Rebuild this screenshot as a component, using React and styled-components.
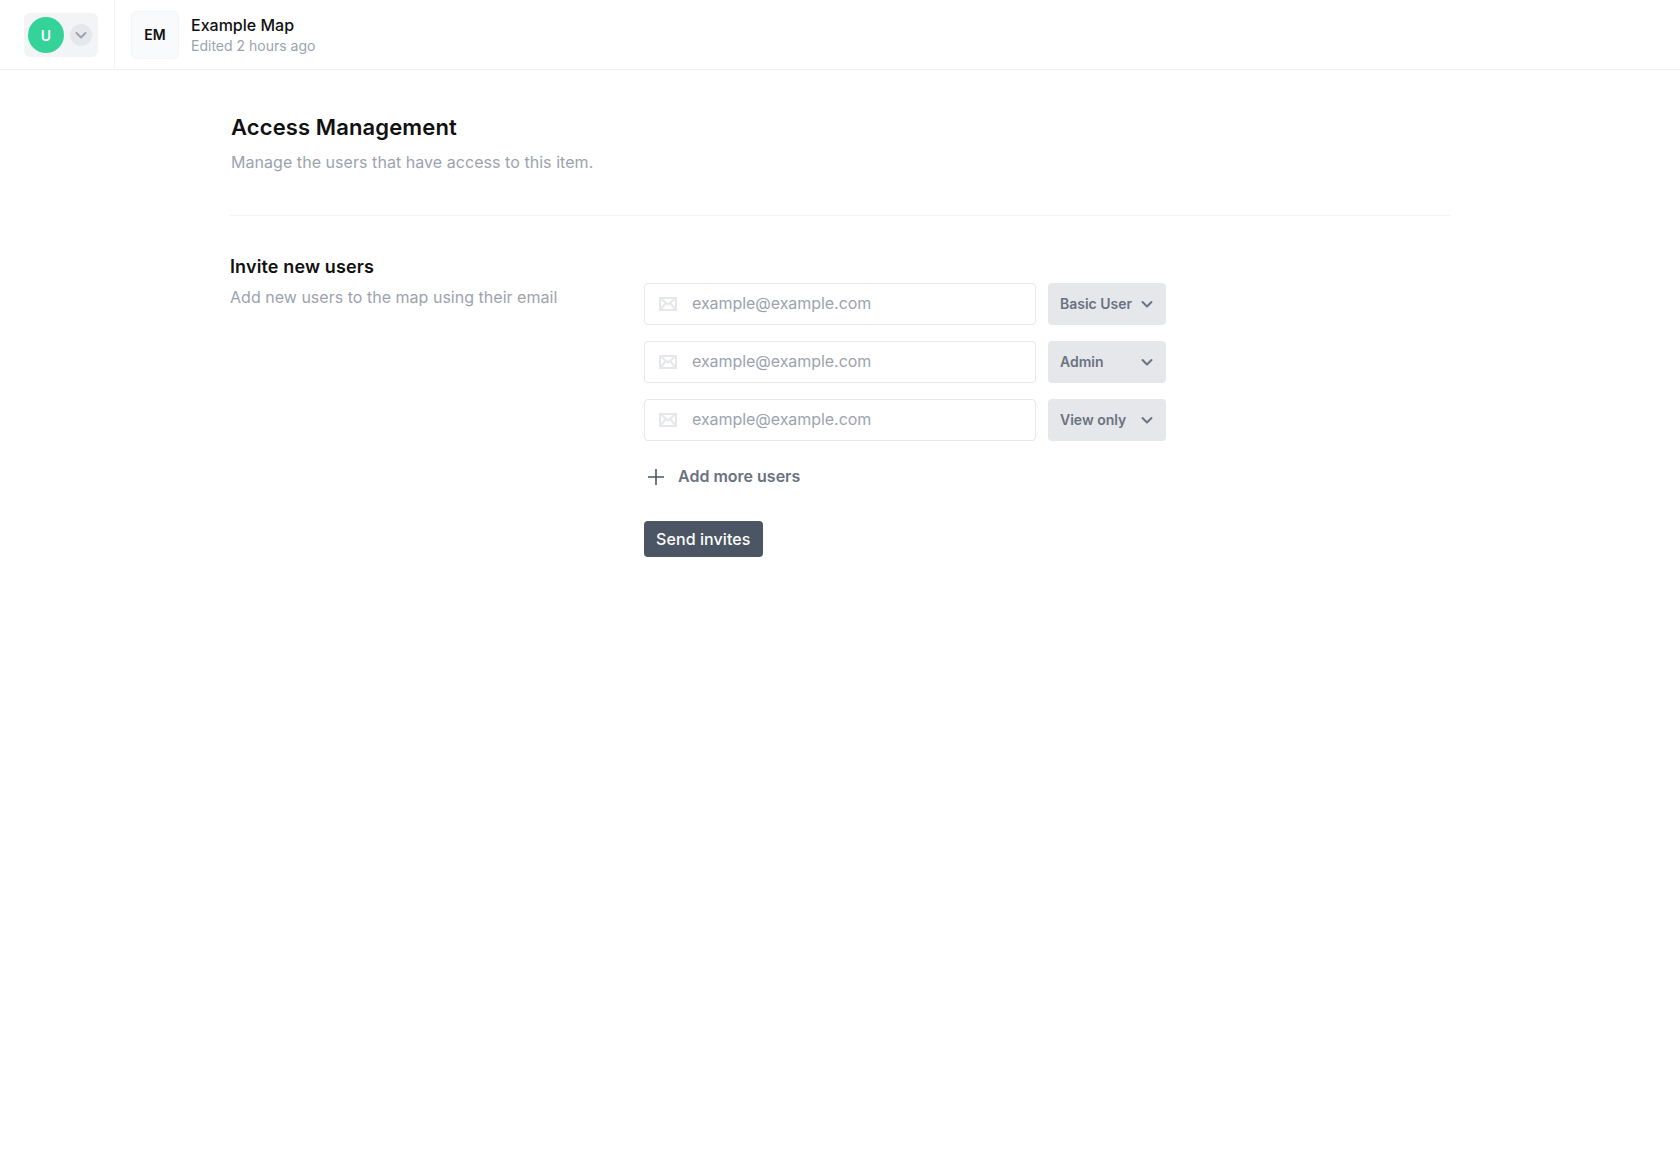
import React from 'react';
import styled, { createGlobalStyle } from 'styled-components';

const GlobalStyle = createGlobalStyle`
  html, body {
    margin: 0;
    padding: 0;
    background: #fff;
    font-family: Inter, "Liberation Sans", sans-serif;
  }
  * { box-sizing: border-box; }
`

//Header
const Header = styled.header`
  display: flex;
  height: 70px;
  border-bottom: 1px solid #f0f1f3;
`
const SwitcherArea = styled.div`
  width: 115px;
  padding: 13px 0 0 24px;
  border-right: 1px solid #f3f4f6;
`
const Switcher = styled.div`
  display: flex;
  align-items: center;
  width: 74px;
  height: 44px;
  padding-left: 4px;
  gap: 6px;
  background: #f3f4f6;
  border-radius: 6px;
`
const Avatar = styled.div`
  display: flex;
  align-items: center;
  justify-content: center;
  width: 36px;
  height: 36px;
  border-radius: 50%;
  background: #34d399;
  color: #fff;
  font-size: 14px;
  font-weight: 600;
`
const ChevronCircle = styled.div`
  display: flex;
  align-items: center;
  justify-content: center;
  width: 22px;
  height: 22px;
  border-radius: 50%;
  background: #e5e7eb;
  color: #9ca3af;
`
const MapInfo = styled.div`
  display: flex;
  align-items: center;
  gap: 12px;
  padding-left: 16px;
`
const MapBadge = styled.div`
  display: flex;
  align-items: center;
  justify-content: center;
  width: 48px;
  height: 48px;
  background: #f9fafb;
  border: 1px solid #f3f4f6;
  border-radius: 6px;
  color: #111;
  font-size: 14px;
  font-weight: 600;
`
const MapText = styled.div`
  padding-top: 1px;
`
const MapTitle = styled.div`
  color: #111;
  font-size: 16px;
  line-height: 20px;
  font-weight: 500;
`
const MapMeta = styled.div`
  margin-top: 1px;
  color: #9ca3af;
  font-size: 14px;
  line-height: 20px;
`

//Page
const Main = styled.main`
  width: 1220px;
  margin-left: 230px;
`
const PageHead = styled.div`
  padding: 42px 0 41px 1px;
  border-bottom: 1px solid #f3f4f6;
`
const PageTitle = styled.h1`
  margin: 0;
  color: #111;
  font-size: 22px;
  line-height: 30px;
  font-weight: 600;
  letter-spacing: 0.12px;
`
const PageSub = styled.p`
  margin: 8px 0 0;
  color: #9ca3af;
  font-size: 16px;
  line-height: 24px;
  letter-spacing: 0.05px;
`
const Section = styled.section`
  display: flex;
  padding-top: 38px;
`
const SectionInfo = styled.div`
  width: 414px;
`
const SectionTitle = styled.h2`
  margin: 0;
  color: #111;
  font-size: 18px;
  line-height: 26px;
  font-weight: 600;
  letter-spacing: 0.13px;
`
const SectionSub = styled.p`
  margin: 5px 0 0;
  color: #9ca3af;
  font-size: 16px;
  line-height: 24px;
  letter-spacing: 0.02px;
`
const InviteForm = styled.div`
  padding-top: 29px;
`
const Row = styled.div`
  display: flex;
  gap: 12px;
  margin-bottom: 16px;
`
const EmailField = styled.label`
  display: flex;
  align-items: center;
  width: 392px;
  height: 42px;
  padding-left: 14px;
  gap: 15px;
  border: 1px solid #e5e7eb;
  border-radius: 4px;
`
const EmailInput = styled.input`
  flex: 1;
  min-width: 0;
  margin-bottom: 2px;
  border: none;
  outline: none;
  padding: 0;
  background: none;
  color: #111;
  font-family: inherit;
  font-size: 16px;
  letter-spacing: -0.05px;

  &::placeholder {
    color: #9ca3af;
    opacity: 1;
  }
`
const RoleSelect = styled.div`
  display: flex;
  align-items: center;
  justify-content: space-between;
  width: 118px;
  height: 42px;
  padding: 0 11px 0 12px;
  background: #e5e7eb;
  border-radius: 4px;
  color: #6b7280;
  font-size: 14px;
  font-weight: 600;
`
const RoleLabel = styled.span`
  margin-bottom: 1px;
`
const AddMore = styled.button`
  display: flex;
  align-items: center;
  gap: 13px;
  height: 24px;
  margin-top: 24px;
  padding: 0 0 0 3px;
  border: none;
  background: none;
  color: #6b7280;
  font-family: inherit;
  font-size: 16px;
  font-weight: 600;
  cursor: pointer;
`
const AddLabel = styled.span`
  margin-bottom: 2px;
`
const SendButton = styled.button`
  display: block;
  height: 36px;
  margin-top: 32px;
  padding: 0 12px;
  border: none;
  border-radius: 4px;
  background: #4b5563;
  color: #fff;
  font-family: inherit;
  font-size: 16px;
  font-weight: 500;
  letter-spacing: 0.09px;
  cursor: pointer;
`

const Chevron = ({size = 16, width = 2}) => (
  <svg width={size} height={size} viewBox="0 0 16 16" fill="none" stroke="currentColor" strokeWidth={width} strokeLinecap="round" strokeLinejoin="round">
    <path d="M3.5 6l4.5 4.5L12.5 6" />
  </svg>
);

const MailIcon = () => (
  <svg width="18" height="14" viewBox="0 0 18 14" fill="none" stroke="#e5e7eb">
    <rect x="1" y="1" width="16" height="12" strokeWidth="2" />
    <path d="M1 1l8 6.5L17 1M1 13l5.8-6.8M17 13l-5.8-6.8" strokeWidth="2" />
  </svg>
);

const PlusIcon = () => (
  <svg width="18" height="18" viewBox="0 0 18 18" fill="none" stroke="#4b5563" strokeWidth="1.6">
    <path d="M9 1v16M1 9h16" />
  </svg>
);

const invites = [
  {id: 1, role: 'Basic User'},
  {id: 2, role: 'Admin'},
  {id: 3, role: 'View only'},
];

const App = () => {
  return (
    <>
      <GlobalStyle />
      <Header>
        <SwitcherArea>
          <Switcher>
            <Avatar>U</Avatar>
            <ChevronCircle><Chevron size={16} /></ChevronCircle>
          </Switcher>
        </SwitcherArea>
        <MapInfo>
          <MapBadge>EM</MapBadge>
          <MapText>
            <MapTitle>Example Map</MapTitle>
            <MapMeta>Edited 2 hours ago</MapMeta>
          </MapText>
        </MapInfo>
      </Header>
      <Main>
        <PageHead>
          <PageTitle>Access Management</PageTitle>
          <PageSub>Manage the users that have access to this item.</PageSub>
        </PageHead>
        <Section>
          <SectionInfo>
            <SectionTitle>Invite new users</SectionTitle>
            <SectionSub>Add new users to the map using their email</SectionSub>
          </SectionInfo>
          <InviteForm>
            {invites.map(invite => (
              <Row key={invite.id}>
                <EmailField>
                  <MailIcon />
                  <EmailInput type="email" placeholder="example@example.com" />
                </EmailField>
                <RoleSelect>
                  <RoleLabel>{invite.role}</RoleLabel>
                  <Chevron size={16} />
                </RoleSelect>
              </Row>
            ))}
            <AddMore><PlusIcon /><AddLabel>Add more users</AddLabel></AddMore>
            <SendButton>Send invites</SendButton>
          </InviteForm>
        </Section>
      </Main>
    </>
  );
};

export default App;
